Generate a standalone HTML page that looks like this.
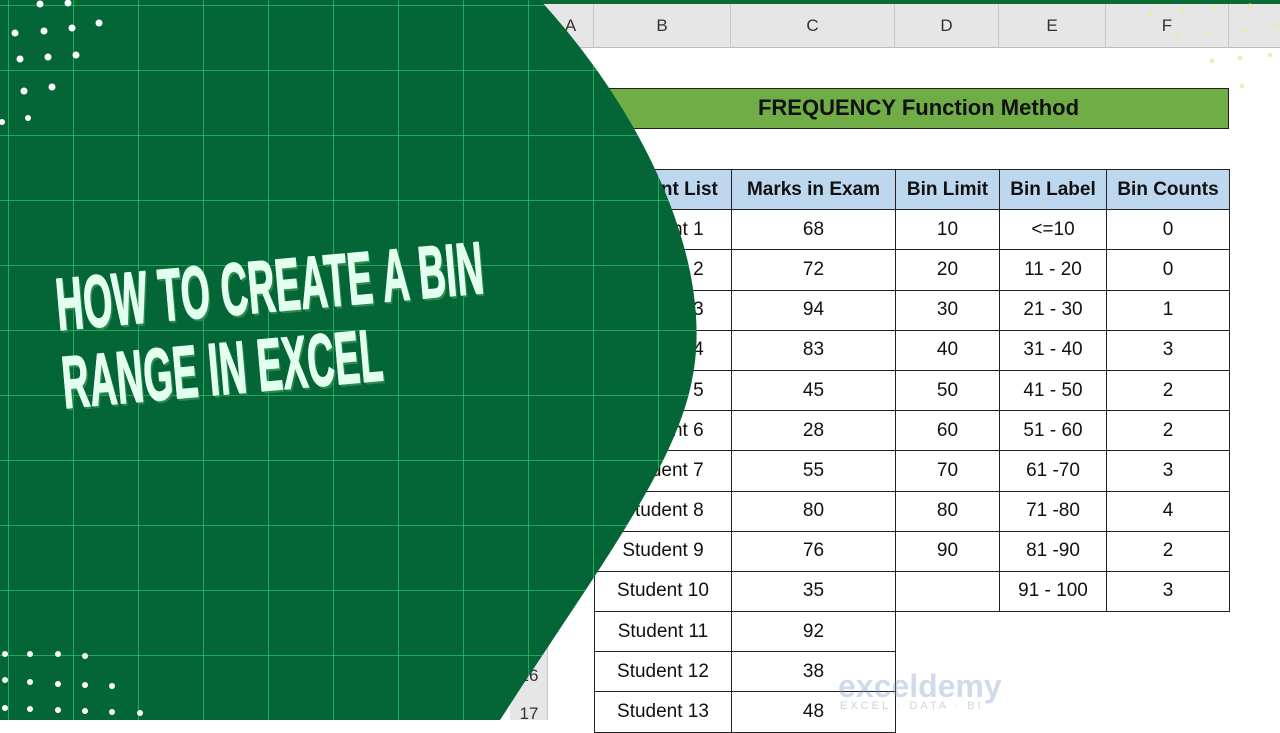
<!DOCTYPE html>
<html><head><meta charset="utf-8"><style>
*{margin:0;padding:0;box-sizing:border-box}
body{width:1280px;height:720px;overflow:hidden;background:#fff;position:relative;font-family:"Liberation Sans",sans-serif}
.a{position:absolute}
.hdr{top:4px;left:0;width:1280px;height:44px;background:#e6e6e6;border-bottom:1px solid #bdbdbd}
.col{position:absolute;top:4px;height:44px;line-height:44px;text-align:center;font-size:17px;color:#333;border-right:1px solid #c8c8c8}
table{position:absolute;border-collapse:collapse;font-size:19px;color:#111}
td{border:1.5px solid #222;height:40.2px;text-align:center;padding:0}
th{border:1.5px solid #222;height:40.2px;background:#bdd7ee;font-size:19px;font-weight:bold}
.t{font-family:"Liberation Sans Narrow","Liberation Sans",sans-serif;font-weight:bold;color:#e3fff0;font-size:74px;letter-spacing:1px;text-shadow:3px 3px 0 #2d8a4f,1px 1px 0 #e3fff0,-1px 0 0 #e3fff0;-webkit-text-stroke:1.5px #e3fff0;white-space:nowrap;transform-origin:0 100%}
</style></head><body>
<div class="a" style="top:0;left:0;width:1280px;height:4px;background:#0b6b34"></div>
<div class="a hdr"></div>
<div class="col" style="left:548px;width:46px">A</div>
<div class="col" style="left:594px;width:137px">B</div>
<div class="col" style="left:731px;width:164px">C</div>
<div class="col" style="left:895px;width:104px">D</div>
<div class="col" style="left:999px;width:107px">E</div>
<div class="col" style="left:1106px;width:123px">F</div>
<div class="a" style="left:510px;top:48px;width:38px;height:672px;background:#e6e6e6;border-right:1px solid #c8c8c8"></div>
<div class="a" style="left:510px;top:666px;width:38px;text-align:center;font-size:17px;color:#333">16</div>
<div class="a" style="left:510px;top:704px;width:38px;text-align:center;font-size:17px;color:#333">17</div>
<div class="a" style="left:608px;top:88px;width:621px;height:41px;background:#70ad47;border:1.5px solid #222;text-align:center;line-height:38px;font-size:22px;font-weight:bold;color:#111">FREQUENCY Function Method</div>
<table style="left:594px;top:169px">
<tr><th style="width:137px">Student List</th><th style="width:164px">Marks in Exam</th><th style="width:104px">Bin Limit</th><th style="width:107px">Bin Label</th><th style="width:123px">Bin Counts</th></tr>
<tr><td>Student 1</td><td>68</td><td>10</td><td>&lt;=10</td><td>0</td></tr>
<tr><td>Student 2</td><td>72</td><td>20</td><td>11 - 20</td><td>0</td></tr>
<tr><td>Student 3</td><td>94</td><td>30</td><td>21 - 30</td><td>1</td></tr>
<tr><td>Student 4</td><td>83</td><td>40</td><td>31 - 40</td><td>3</td></tr>
<tr><td>Student 5</td><td>45</td><td>50</td><td>41 - 50</td><td>2</td></tr>
<tr><td>Student 6</td><td>28</td><td>60</td><td>51 - 60</td><td>2</td></tr>
<tr><td>Student 7</td><td>55</td><td>70</td><td>61 -70</td><td>3</td></tr>
<tr><td>Student 8</td><td>80</td><td>80</td><td>71 -80</td><td>4</td></tr>
<tr><td>Student 9</td><td>76</td><td>90</td><td>81 -90</td><td>2</td></tr>
<tr><td>Student 10</td><td>35</td><td></td><td>91 - 100</td><td>3</td></tr>
<tr><td>Student 11</td><td>92</td><td style="border:none;border-left:1.5px solid #222"></td><td style="border:none"></td><td style="border:none"></td></tr>
<tr><td>Student 12</td><td>38</td><td style="border:none;border-left:1.5px solid #222"></td><td style="border:none"></td><td style="border:none"></td></tr>
<tr><td>Student 13</td><td>48</td><td style="border:none;border-left:1.5px solid #222"></td><td style="border:none"></td><td style="border:none"></td></tr>
</table>
<div class="a" style="left:838px;top:668px;font-size:32px;font-weight:bold;color:rgba(120,150,200,0.35)">exceldemy</div>
<div class="a" style="left:840px;top:700px;font-size:11px;letter-spacing:3px;color:rgba(120,130,150,0.35)">EXCEL · DATA · BI</div>
<svg class="a" style="left:0;top:0" width="1280" height="720">
<defs><clipPath id="c"><path d="M0 0 L540 0 C650 120 715 270 692 380 C675 470 590 580 500 720 L0 720Z"/></clipPath>
<pattern id="g" width="65" height="65" patternUnits="userSpaceOnUse" x="8" y="5"><path d="M0 0H65M0 0V65" stroke="#2fcf6e" stroke-width="1.3" fill="none"/></pattern></defs>
<g clip-path="url(#c)"><rect width="1280" height="720" fill="#046637"/><rect width="1280" height="720" fill="url(#g)"/></g>
<g fill="#fff">
<circle cx="40" cy="4" r="3.5"/><circle cx="68" cy="3" r="3.5"/>
<circle cx="15" cy="33" r="3.5"/><circle cx="44" cy="31" r="3.5"/><circle cx="72" cy="28" r="3.5"/><circle cx="99" cy="23" r="3.5"/>
<circle cx="20" cy="59" r="3.5"/><circle cx="48" cy="57" r="3.5"/><circle cx="76" cy="55" r="3.5"/>
<circle cx="24" cy="91" r="3.5"/><circle cx="52" cy="87" r="3.5"/>
<circle cx="2" cy="122" r="3"/><circle cx="28" cy="118" r="3"/>
<circle cx="5" cy="654" r="3"/><circle cx="30" cy="654" r="3"/><circle cx="58" cy="654" r="3"/><circle cx="85" cy="656" r="3"/>
<circle cx="5" cy="680" r="3"/><circle cx="30" cy="682" r="3"/><circle cx="58" cy="684" r="3"/><circle cx="85" cy="685" r="3"/><circle cx="112" cy="686" r="3"/>
<circle cx="5" cy="708" r="3"/><circle cx="30" cy="709" r="3"/><circle cx="58" cy="710" r="3"/><circle cx="85" cy="711" r="3"/><circle cx="112" cy="712" r="3"/><circle cx="140" cy="713" r="3"/>
</g>
<g fill="#f3e6a8" opacity="0.8">
<circle cx="1150" cy="14" r="2.5"/><circle cx="1182" cy="10" r="2.5"/><circle cx="1215" cy="8" r="2.5"/><circle cx="1250" cy="6" r="2.5"/>
<circle cx="1178" cy="37" r="2.5"/><circle cx="1210" cy="33" r="2.5"/><circle cx="1245" cy="30" r="2.5"/><circle cx="1275" cy="26" r="2.5"/>
<circle cx="1212" cy="61" r="2.5"/><circle cx="1240" cy="58" r="2.5"/><circle cx="1270" cy="55" r="2.5"/><circle cx="1242" cy="86" r="2.5"/>
</g>
</svg>
<div class="a t" style="left:60px;top:262px;transform:rotate(-5deg) scaleX(0.5)">HOW TO CREATE A BIN</div>
<div class="a t" style="left:66px;top:340px;transform:rotate(-5deg) scaleX(0.5)">RANGE IN EXCEL</div>
</body></html>
